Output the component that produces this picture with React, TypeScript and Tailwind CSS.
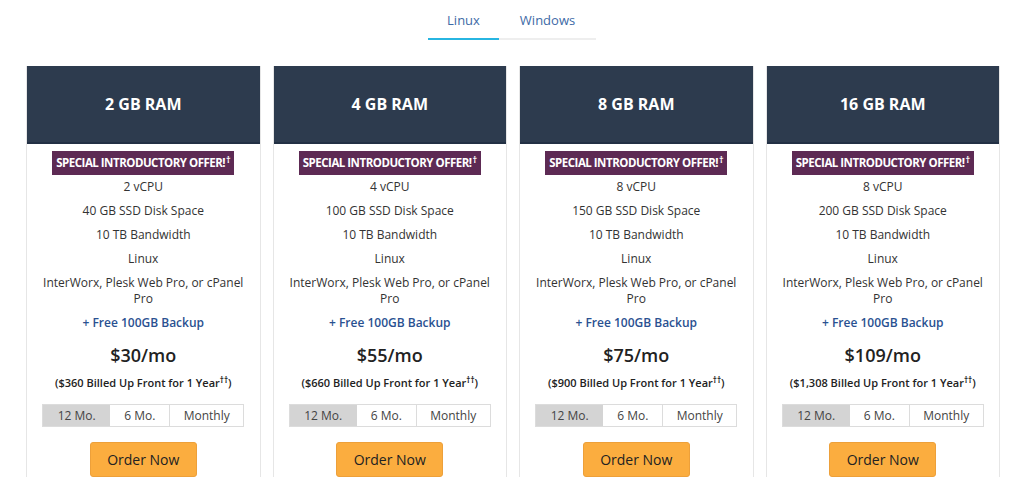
import React from 'react';

type Plan = {
  ram: string;
  cpu: string;
  disk: string;
  price: string;
  billed: string;
};

const plans: Plan[] = [
  { ram: '2 GB RAM', cpu: '2 vCPU', disk: '40 GB SSD Disk Space', price: '$30/mo', billed: '$360' },
  { ram: '4 GB RAM', cpu: '4 vCPU', disk: '100 GB SSD Disk Space', price: '$55/mo', billed: '$660' },
  { ram: '8 GB RAM', cpu: '8 vCPU', disk: '150 GB SSD Disk Space', price: '$75/mo', billed: '$900' },
  { ram: '16 GB RAM', cpu: '8 vCPU', disk: '200 GB SSD Disk Space', price: '$109/mo', billed: '$1,308' },
];

const PlanCard: React.FC<{ plan: Plan }> = ({ plan }) => (
  <div className="flex flex-col border-x border-[#e6e6e6] bg-white">
    <div className="h-[78px] flex items-center justify-center bg-[#2d3b4e] border-b-2 border-[#223044]">
      <h3 className="text-white text-[16px] font-bold">{plan.ram}</h3>
    </div>
    <div className="flex flex-col items-center px-[12px] pt-[7px] text-[12px] leading-4 text-[#333]">
      <span className="bg-[#5d2a54] text-white font-bold text-[11.5px] tracking-[-0.5px] px-[4px] py-[4px] leading-4">
        SPECIAL INTRODUCTORY OFFER!<sup className="text-[9px] ml-[1px]">†</sup>
      </span>
      <ul className="flex flex-col items-center gap-2 mt-[4px] text-center">
        <li>{plan.cpu}</li>
        <li>{plan.disk}</li>
        <li>10 TB Bandwidth</li>
        <li>Linux</li>
        <li>InterWorx, Plesk Web Pro, or cPanel Pro</li>
        <li className="text-[#2a5191] font-semibold">+ Free 100GB Backup</li>
      </ul>
      <div className="mt-[12px] text-[18px] font-semibold text-[#222] leading-6">{plan.price}</div>
      <div className="mt-[8px] text-[11px] font-semibold text-[#222]">
        ({plan.billed} Billed Up Front for 1 Year<sup className="text-[8px] font-bold">††</sup>)
      </div>
      <div className="mt-[13px] flex w-[202px] border border-[#dcdcdc] text-[12px] text-[#444]">
        <div className="w-[67px] h-[21px] flex items-center justify-center bg-[#d4d4d4]">12 Mo.</div>
        <div className="w-[60px] h-[21px] flex items-center justify-center border-r border-[#dcdcdc]">6 Mo.</div>
        <div className="flex-1 h-[21px] flex items-center justify-center">Monthly</div>
      </div>
      <button className="mt-[15px] w-[107px] h-[35px] bg-[#fbad3f] border border-[#eda03a] rounded-[3px] text-[14px] text-[#222]">
        Order Now
      </button>
    </div>
  </div>
);

export default function App() {
  return (
    <div className="min-h-screen bg-white font-['Open_Sans',sans-serif]">
      <div className="flex justify-center pt-[10px]">
        <div className="flex w-[168px]">
          <div className="w-[71px] h-[30px] pb-[6px] flex items-center justify-center text-[13px] text-[#3d6aa6] border-b-2 border-[#27b5e1]">
            Linux
          </div>
          <div className="flex-1 h-[30px] pb-[6px] flex items-center justify-center text-[13px] text-[#3d6aa6] border-b-2 border-[#eeeeee]">
            Windows
          </div>
        </div>
      </div>
      <div className="grid grid-cols-4 gap-3 pl-[26px] pr-6 mt-[26px]">
        {plans.map((p) => (
          <PlanCard key={p.ram} plan={p} />
        ))}
      </div>
    </div>
  );
}
